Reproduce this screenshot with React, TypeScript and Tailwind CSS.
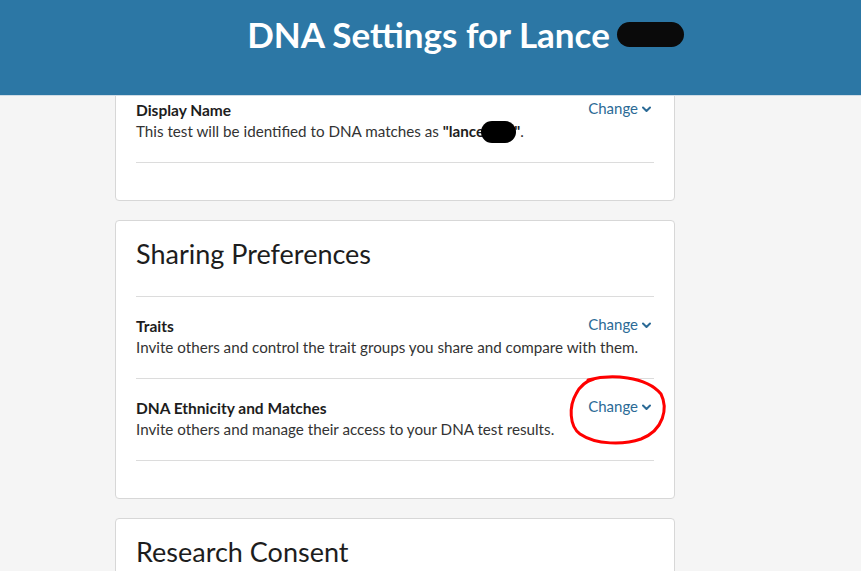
import React from "react";

const Chevron = () => (
  <svg width="9" height="7" viewBox="0 0 9 7" className="ml-[4px] mt-[1px]">
    <path d="M1 1.5 L4.5 5 L8 1.5" fill="none" stroke="#2b6a96" strokeWidth="2" strokeLinecap="round" strokeLinejoin="round" />
  </svg>
);

const ChangeLink = () => (
  <button className="flex items-center text-[15px] text-[#2b6a96] leading-none">
    Change
    <Chevron />
  </button>
);

const Row = ({ title, children }: { title: string; children: React.ReactNode }) => (
  <div className="border-b border-[#dcdcdc] pt-[19px] pb-[20px]">
    <div className="flex items-start justify-between">
      <div className="text-[15.5px] font-bold text-[#1d1d1d] leading-[20px]">{title}</div>
      <div className="pr-[3px] pt-[1px]"><ChangeLink /></div>
    </div>
    <div className="text-[15.2px] text-[#333] leading-[22px]">{children}</div>
  </div>
);

export default function App() {
  return (
    <div className="min-h-[571px] bg-[#f5f5f5] relative overflow-hidden" style={{ fontFamily: "Lato, 'Liberation Sans', sans-serif" }}>
      <header className="relative z-10 h-[96px] bg-[#2c77a5] border-b border-[#cfdce6] flex justify-center items-start">
        <h1 className="mt-[14px] ml-[70px] text-[35px] font-bold text-white leading-[40px] flex items-center">
          DNA Settings for Lance
          <span className="inline-block ml-[7px] w-[67px] h-[25px] rounded-full bg-[#0a0a0a]" />
        </h1>
      </header>
      <main className="w-[560px] ml-[115px] flex flex-col gap-[19px]">
        <section className="-mt-[16px] bg-white border border-[#d7d7d7] rounded-[4px] px-[20px] pb-[37px]">
          <Row title="Display Name">
            This test will be identified to DNA matches as{" "}
            <b className="text-[#1d1d1d]">"lance<span className="inline-block align-top w-[35px] h-[22px] rounded-full bg-black -ml-[3px] -mr-[2px] translate-y-[1px]" />"</b>.
          </Row>
        </section>
        <section className="bg-white border border-[#d7d7d7] rounded-[4px] px-[20px] pb-[37px]">
          <h2 className="text-[27px] text-[#1d1d1d] pt-[16px] pb-[25px] border-b border-[#dcdcdc] leading-[34px]">Sharing Preferences</h2>
          <Row title="Traits">Invite others and control the trait groups you share and compare with them.</Row>
          <Row title="DNA Ethnicity and Matches">Invite others and manage their access to your DNA test results.</Row>
        </section>
        <section className="bg-white border border-[#d7d7d7] rounded-[4px] px-[20px] h-[120px]">
          <h2 className="text-[27px] text-[#1d1d1d] pt-[16px] leading-[34px]">Research Consent</h2>
        </section>
      </main>
      <svg className="absolute left-[566px] top-[372px] z-20" width="104" height="76" viewBox="0 0 104 76">
        <path d="M22 8 C45 2 80 4 95 22 C102 36 98 58 75 67 C58 73 30 73 14 62 C3 54 3 34 10 22 C14 14 20 9 28 7" fill="none" stroke="#ff0000" strokeWidth="3" strokeLinecap="round" />
      </svg>
    </div>
  );
}
